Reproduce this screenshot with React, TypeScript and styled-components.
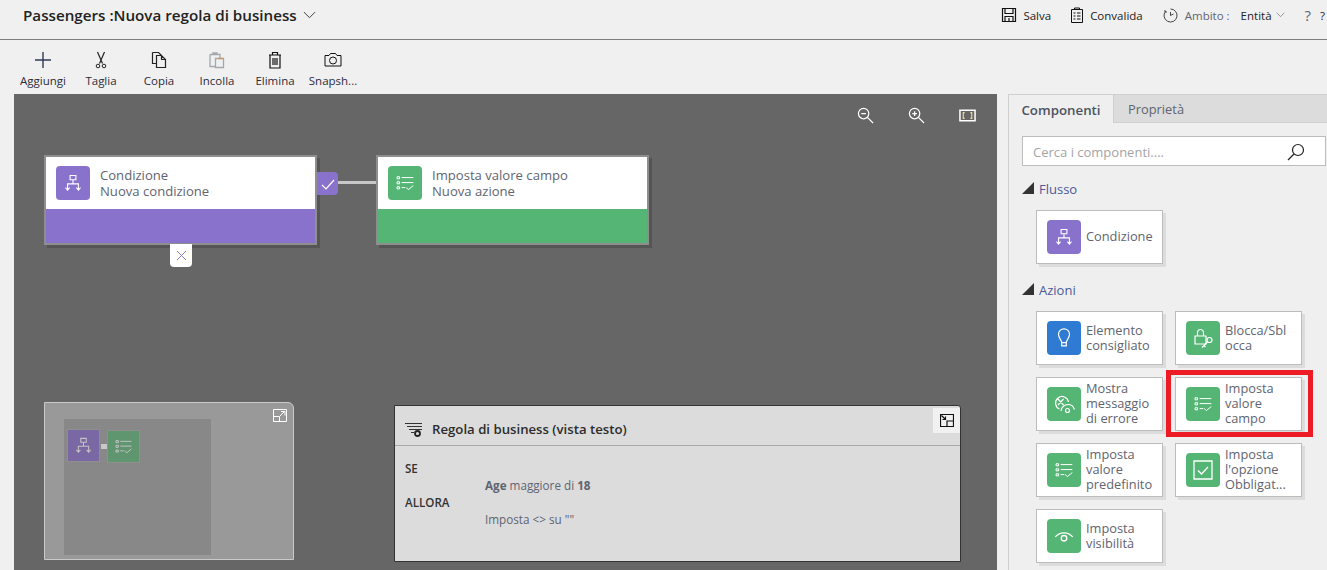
import React from 'react'
import styled, { createGlobalStyle } from 'styled-components'

const FONT = '"Open Sans", "Noto Sans", "Liberation Sans", sans-serif'
const PURPLE = '#8972cc'
const GREEN = '#54b574'
const BLUE = '#2f7bd3'
const TEXT = '#5f6470'
const DARK = '#222'

const GlobalStyle = createGlobalStyle`
  html, body {
    margin: 0;
    height: 100%;
    overflow: hidden;
    background: #f0f0f0;
    font-family: ${FONT};
  }
  * { box-sizing: border-box; }
`

const Page = styled.div`
  width: 1327px;
  height: 570px;
  display: flex;
  flex-direction: column;
  overflow: hidden;
`

const Header = styled.header`
  height: 40px;
  flex: none;
  display: flex;
  align-items: center;
  justify-content: space-between;
  padding: 0 2px 9px 23px;
  border-bottom: 1px solid #7c7c7c;
`

const Title = styled.div`
  display: flex;
  align-items: center;
  gap: 6px;
  font-size: 15.2px;
  font-weight: 600;
  color: ${DARK};
`

const Actions = styled.div`
  display: flex;
  align-items: center;
  font-size: 11.5px;
  color: ${DARK};
`

const Action = styled.div<{ $gap: number; $right: number }>`
  display: flex;
  align-items: center;
  gap: ${({ $gap }) => $gap}px;
  margin-right: ${({ $right }) => $right}px;
  white-space: nowrap;
`

const Muted = styled.span`
  color: ${TEXT};
`

const HelpMark = styled(Muted)`
  font-size: 15px;
`

const Toolbar = styled.div`
  height: 54px;
  flex: none;
  display: flex;
  padding-left: 14px;
`

const ToolButton = styled.button`
  width: 58px;
  border: 0;
  padding: 11px 0 0;
  background: none;
  display: flex;
  flex-direction: column;
  align-items: center;
  gap: 4px;
  font-family: ${FONT};
  font-size: 11.5px;
  line-height: 15px;
  color: #2c2c3c;
  white-space: nowrap;
`

const Main = styled.main`
  flex: 1;
  display: flex;
  min-height: 0;
  padding-left: 14px;
`

const Canvas = styled.section`
  position: relative;
  width: 983px;
  flex: none;
  background: #666;
  overflow: hidden;
`

const ZoomBar = styled.div`
  position: absolute;
  top: 13px;
  right: 21px;
  display: flex;
  align-items: center;
  gap: 34px;
  color: #fff;
`

const Node = styled.div<{ $x: number }>`
  position: absolute;
  left: ${({ $x }) => $x}px;
  top: 61px;
  width: 273px;
  height: 90px;
  display: flex;
  flex-direction: column;
  background: #fff;
  border: 2px solid #8e8e8e;
  box-shadow: 3px 3px 0 #555;
`

const NodeBody = styled.div`
  height: 52px;
  flex: none;
  display: flex;
  align-items: center;
  gap: 10px;
  padding: 0 0 1px 10px;
  font-size: 13.1px;
  line-height: 16px;
  color: ${TEXT};
`

const NodeFooter = styled.div<{ $color: string }>`
  flex: 1;
  background: ${({ $color }) => $color};
`

const IconTile = styled.div<{ $color: string }>`
  width: 34px;
  height: 34px;
  flex: none;
  display: flex;
  align-items: center;
  justify-content: center;
  border-radius: 4px;
  background: ${({ $color }) => $color};
  color: #fff;
`

const CheckTab = styled.div`
  position: absolute;
  left: 303px;
  top: 78px;
  width: 21px;
  height: 23px;
  display: flex;
  align-items: center;
  justify-content: center;
  border-radius: 0 4px 4px 0;
  background: ${PURPLE};
  color: #fff;
`

const Connector = styled.div`
  position: absolute;
  left: 324px;
  top: 87px;
  width: 39px;
  height: 3px;
  background: #c8c8c8;
`

const CloseTab = styled.div`
  position: absolute;
  left: 156px;
  top: 150px;
  width: 22px;
  height: 23px;
  display: flex;
  align-items: center;
  justify-content: center;
  border-radius: 0 0 4px 4px;
  background: #fff;
  color: #8a7ad0;
`

const MiniMap = styled.div`
  position: absolute;
  left: 30px;
  top: 308px;
  width: 250px;
  height: 158px;
  padding: 16px 0 0 19px;
  background: #999;
  border: 1px solid #c9c9c9;
  border-top-right-radius: 6px;
`

const MiniExpand = styled.div`
  position: absolute;
  top: 6px;
  right: 6px;
  color: #fff;
  line-height: 0;
`

const MiniPage = styled.div`
  width: 147px;
  height: 136px;
  padding: 10px 0 0 3px;
  display: flex;
  align-items: flex-start;
  background: #888;
`

const MiniTile = styled.div<{ $color: string; $down?: boolean }>`
  width: 33px;
  height: 33px;
  flex: none;
  margin-top: ${({ $down }) => ($down ? 1 : 0)}px;
  display: flex;
  align-items: center;
  justify-content: center;
  background: ${({ $color }) => $color};
  border: 1px solid #8f8f8f;
  color: #c4c4c4;
`

const MiniLink = styled.div`
  width: 8px;
  height: 5px;
  flex: none;
  margin: 15px -2px 0 1px;
  background: #c8c8c8;
`

const RulePanel = styled.div`
  position: absolute;
  left: 380px;
  top: 311px;
  width: 567px;
  height: 157px;
  background: #dcdcdc;
  border: 1px solid #333;
  border-top-right-radius: 3px;
`

const RuleHeader = styled.div`
  height: 40px;
  display: flex;
  align-items: center;
  gap: 9px;
  padding: 6px 0 0 10px;
  border-bottom: 1px solid #a8a8a8;
  font-size: 13.2px;
  font-weight: 600;
  color: #2c2c2c;
`

const RuleExpand = styled.div`
  position: absolute;
  top: 2px;
  right: 0;
  width: 27px;
  height: 25px;
  display: flex;
  align-items: center;
  justify-content: center;
  background: #f1f1f1;
  color: #111;
`

const RuleBody = styled.div`
  padding-top: 14px;
  font-size: 11.7px;
  line-height: 17px;
`

const RuleKeyword = styled.div`
  padding-left: 10px;
  font-weight: 600;
  font-size: 11.6px;
  color: #333;
`

const RuleLine = styled.div`
  padding-left: 90px;
  color: ${TEXT};

  b {
    font-weight: 700;
  }
`

const Side = styled.aside`
  flex: 1;
  margin-left: 11px;
  min-width: 0;
  background: #efefef;
  border-left: 1px solid #cfcfcf;
  border-top: 1px solid #cfcfcf;
`

const Tabs = styled.div`
  height: 28px;
  display: flex;
  background: #dcdcdc;
  border-bottom: 1px solid #cfcfcf;
`

const Tab = styled.div<{ $active?: boolean }>`
  height: ${({ $active }) => ($active ? 28 : 27)}px;
  display: flex;
  align-items: center;
  justify-content: center;
  padding-top: 1px;
  width: ${({ $active }) => ($active ? 105 : 84)}px;
  font-size: ${({ $active }) => ($active ? 13.3 : 12.9)}px;
  font-weight: ${({ $active }) => ($active ? 600 : 400)};
  color: ${({ $active }) => ($active ? '#4c5260' : TEXT)};
  background: ${({ $active }) => ($active ? '#efefef' : 'transparent')};
  border-right: ${({ $active }) => ($active ? '1px solid #cfcfcf' : '0')};
`

const SideBody = styled.div`
  padding: 13px 0 0 13px;
`

const Search = styled.div`
  width: 304px;
  height: 30px;
  display: flex;
  align-items: center;
  justify-content: space-between;
  padding: 1px 20px 0 10px;
  background: #fff;
  border: 1px solid #bdbdbd;
  font-size: 13px;
  color: #a4a4a4;
`

const GroupTitle = styled.div<{ $top: number }>`
  display: flex;
  align-items: center;
  gap: 5px;
  margin-top: ${({ $top }) => $top}px;
  height: 18px;
  font-size: 13px;
  color: #4a5a9a;
`

const Triangle = styled.span`
  width: 0;
  height: 0;
  margin-top: -3px;
  border-style: solid;
  border-width: 0 0 12px 12px;
  border-color: transparent transparent #333 transparent;
`

const CardGrid = styled.div`
  display: grid;
  grid-template-columns: repeat(2, 127px);
  grid-auto-rows: 54px;
  gap: 12px;
  margin: 12px 0 0 14px;
`

const Card = styled.div<{ $marked?: boolean }>`
  position: relative;
  display: flex;
  align-items: center;
  gap: 5px;
  padding-left: 10px;
  background: #fff;
  border: 1px solid #bcbcbc;
  box-shadow: 3px 3px 0 #dcdcdc;
  font-size: 12.8px;
  line-height: 15px;
  color: ${TEXT};

  ${({ $marked }) =>
    $marked &&
    `
    &::after {
      content: '';
      box-sizing: border-box;
      position: absolute;
      left: -10px;
      top: -8px;
      width: 147px;
      height: 67px;
      border: 5px solid #ed1c24;
    }
  `}
`

const CardLabel = styled.span`
  width: 74px;
  margin-bottom: 1px;
  overflow-wrap: anywhere;
`

type IconProps = { size?: number }

const Svg: React.FC<React.PropsWithChildren<{ size: number; box?: number }>> = ({ size, box = 24, children }) => (
  <svg
    width={size}
    height={size}
    viewBox={`0 0 ${box} ${box}`}
    fill="none"
    stroke="currentColor"
    strokeWidth={1}
    style={{ display: 'block', flex: 'none' }}
  >
    {children}
  </svg>
)

const FlowIcon: React.FC<IconProps> = ({ size = 20 }) => (
  <Svg size={size}>
    <path d="M8.500 3h7v5h-7zM12 8v5M5.500 20v-7h13v7M3 17.500l2.500 3 2.500-3M16 17.500l2.500 3 2.500-3" strokeWidth={1.3} />
  </Svg>
)

const FieldIcon: React.FC<IconProps> = ({ size = 20 }) => (
  <Svg size={size}>
    <path d="M2.500 4.500h3v2.500h-3zM2.500 10.500h3v2.500h-3zM2.500 16.500h3v2.500h-3zM8 5.500h14M8 11.500h14M8 17.500h4M13 17l3 3 6-5" strokeWidth={1.2} />
  </Svg>
)

const BulbIcon: React.FC<IconProps> = ({ size = 22 }) => (
  <Svg size={size}>
    <path d="M9.500 17c0-3-3.500-4.500-3.500-9a6 6 0 0 1 12 0c0 4.500-3.500 6-3.500 9zM9.500 17v3.500h5V17" strokeWidth={1.3} />
  </Svg>
)

const LockIcon: React.FC<IconProps> = ({ size = 24 }) => (
  <Svg size={size}>
    <path d="M4 10h11v8H4zM6.500 10V6.500a3 3 0 0 1 6 0V10" strokeWidth={1.2} />
    <circle cx="18.500" cy="14" r="2.500" strokeWidth={1.2} />
    <path d="M16.800 15.800L11 21.500M13 19.500l1.500 1.500" strokeWidth={1.2} />
  </Svg>
)

const ErrorIcon: React.FC<IconProps> = ({ size = 24 }) => (
  <Svg size={size}>
    <path d="M7.500 17a6.500 6.500 0 1 1 9-7M6 7l5.500 6M11.500 7L6 13M9 19c0-4 4-6.500 7-6.500s5.500 2 6.500 5" strokeWidth={1.2} />
    <circle cx="15.500" cy="18.500" r="2" strokeWidth={1.2} />
  </Svg>
)

const CheckboxIcon: React.FC<IconProps> = ({ size = 24 }) => (
  <Svg size={size}>
    <path d="M3 3h18v18H3zM7 12.500l3.500 3.500 6.500-7" strokeWidth={1.3} />
  </Svg>
)

const EyeIcon: React.FC<IconProps> = ({ size = 22 }) => (
  <Svg size={size}>
    <path d="M2.500 13c5-6 14-6 19 0" strokeWidth={1.3} />
    <circle cx="12" cy="14.500" r="3" strokeWidth={1.5} />
  </Svg>
)

const Chevron: React.FC<{ size: number; color: string }> = ({ size, color }) => (
  <svg width={size} height={size * 0.6} viewBox="0 0 14 8" fill="none" stroke={color} strokeWidth={1} style={{ display: 'block' }}>
    <path d="M1 1l6 6 6-6" />
  </svg>
)

const SaveIcon = () => (
  <Svg size={16} box={16}>
    <path d="M1.500 1.500h13v13h-13zM4 1.500v5h8v-5M4 14.500v-5h8v5M8 11v3.500" stroke="#111" strokeWidth={1.2} />
  </Svg>
)

const ValidateIcon = () => (
  <Svg size={16} box={16}>
    <path d="M2.500 2.500h11v13h-11zM5.500 2.500V1h5v1.500M4.500 6h2M8 6h3.500M4.500 9h2M8 9h3.500M4.500 12h2M8 12h3.500" stroke="#111" />
  </Svg>
)

const ScopeIcon = () => (
  <Svg size={15} box={15}>
    <path d="M7.500 1a6.500 6.500 0 1 1-5 2.400M7.500 7.500V4M7.500 7.500l3-1.500M2 2v2h2" stroke="#444" />
  </Svg>
)

const ToolIcons: Record<string, React.ReactNode> = {
  plus: (
    <Svg size={18} box={18}>
      <path d="M9 1v16M1 9h16" stroke="#2f3a55" strokeWidth={1.4} />
    </Svg>
  ),
  cut: (
    <Svg size={18} box={18}>
      <path d="M5.500 1l5 11.500M12.500 1l-5 11.500" stroke="#222" strokeWidth={1.2} />
      <circle cx="6" cy="15" r="1.800" stroke="#222" />
      <circle cx="12" cy="15" r="1.800" stroke="#222" />
    </Svg>
  ),
  copy: (
    <Svg size={18} box={18}>
      <path d="M2.500 1.500h6l3 3M2.500 1.500v11H6M6.500 4.500h5l4 4v8h-9zM11.500 4.500v4h4" stroke="#222" strokeWidth={1.2} />
    </Svg>
  ),
  paste: (
    <Svg size={18} box={18}>
      <path d="M2 3.500h10v4M2 3.500v12h5M5 3.500V2h4v1.500M7.500 7.500h8v9h-8z" stroke="#a3a8ae" strokeWidth={1.3} />
      <path d="M10 7.500h5" stroke="#c89868" strokeWidth={1.3} />
    </Svg>
  ),
  trash: (
    <Svg size={18} box={18}>
      <path d="M3 4h12M6.500 4V1.500h5V4M4 4v13h10V4M7 7v7M9 7v7M11 7v7" stroke="#111" strokeWidth={1.2} />
    </Svg>
  ),
  camera: (
    <Svg size={18} box={18}>
      <path d="M1 4.500h4L6.500 2.500h5L13 4.500h4V15H1z" stroke="#111" />
      <circle cx="9" cy="9.500" r="3.500" stroke="#111" />
    </Svg>
  ),
}

const TOOLS = [
  { icon: 'plus', label: 'Aggiungi' },
  { icon: 'cut', label: 'Taglia' },
  { icon: 'copy', label: 'Copia' },
  { icon: 'paste', label: 'Incolla' },
  { icon: 'trash', label: 'Elimina' },
  { icon: 'camera', label: 'Snapsh...' },
]

const ACTIONS = [
  { color: BLUE, icon: <BulbIcon />, label: 'Elemento consigliato' },
  { color: GREEN, icon: <LockIcon />, label: 'Blocca/Sbl occa' },
  { color: GREEN, icon: <ErrorIcon />, label: 'Mostra messaggio di errore' },
  { color: GREEN, icon: <FieldIcon />, label: 'Imposta valore campo', marked: true },
  { color: GREEN, icon: <FieldIcon />, label: 'Imposta valore predefinito' },
  { color: GREEN, icon: <CheckboxIcon />, label: "Imposta l'opzione Obbligat..." },
  { color: GREEN, icon: <EyeIcon />, label: 'Imposta visibilità' },
]

const App: React.FC = () => (
  <Page>
    <GlobalStyle />
    <Header>
      <Title>
        Passengers :Nuova regola di business
        <Chevron size={13} color="#333" />
      </Title>
      <Actions>
        <Action $gap={6} $right={18}>
          <SaveIcon />
          Salva
        </Action>
        <Action $gap={5} $right={20}>
          <ValidateIcon />
          Convalida
        </Action>
        <Action $gap={7} $right={11}>
          <ScopeIcon />
          <Muted>Ambito :</Muted>
        </Action>
        <Action $gap={4} $right={20}>
          Entità
          <Chevron size={9} color="#666" />
        </Action>
        <Action $gap={9} $right={0}>
          <HelpMark>?</HelpMark>
          <span>?</span>
        </Action>
      </Actions>
    </Header>

    <Toolbar>
      {TOOLS.map(({ icon, label }) => (
        <ToolButton key={label}>
          {ToolIcons[icon]}
          {label}
        </ToolButton>
      ))}
    </Toolbar>

    <Main>
      <Canvas>
        <ZoomBar>
          <Svg size={17} box={18}>
            <circle cx="7" cy="7" r="5.500" strokeWidth={1.3} />
            <path d="M4.500 7h5M11 11l6 6" strokeWidth={1.3} />
          </Svg>
          <Svg size={17} box={18}>
            <circle cx="7" cy="7" r="5.500" strokeWidth={1.3} />
            <path d="M4.500 7h5M7 4.500v5M11 11l6 6" strokeWidth={1.3} />
          </Svg>
          <Svg size={17} box={18}>
            <path d="M1 3.500h16v11H1z" strokeWidth={1.6} />
            <path d="M6 6H4.500v6H6M12 6h1.500v6H12" stroke="#f0d9a8" strokeWidth={1.2} />
          </Svg>
        </ZoomBar>

        <Node $x={30}>
          <NodeBody>
            <IconTile $color={PURPLE}>
              <FlowIcon />
            </IconTile>
            <div>
              Condizione
              <br />
              Nuova condizione
            </div>
          </NodeBody>
          <NodeFooter $color={PURPLE} />
        </Node>
        <CheckTab>
          <Svg size={14} box={14}>
            <path d="M1 8l4 4 8-9" strokeWidth={1.2} />
          </Svg>
        </CheckTab>
        <Connector />
        <CloseTab>
          <Svg size={11} box={11}>
            <path d="M1 1l9 9M10 1l-9 9" />
          </Svg>
        </CloseTab>
        <Node $x={362}>
          <NodeBody>
            <IconTile $color={GREEN}>
              <FieldIcon />
            </IconTile>
            <div>
              Imposta valore campo
              <br />
              Nuova azione
            </div>
          </NodeBody>
          <NodeFooter $color={GREEN} />
        </Node>

        <MiniMap>
          <MiniExpand>
            <Svg size={14} box={14}>
              <path d="M.5.500h13v12H.5zM.5 7.500h6v5M7 7l5-5M8 2.500h4v4" />
            </Svg>
          </MiniExpand>
          <MiniPage>
            <MiniTile $color="#7a68a4">
              <FlowIcon size={19} />
            </MiniTile>
            <MiniLink />
            <MiniTile $color="#5f9670" $down>
              <FieldIcon size={19} />
            </MiniTile>
          </MiniPage>
        </MiniMap>

        <RulePanel>
          <RuleExpand>
            <Svg size={14} box={14}>
              <path d="M.5.500h13v12H.5zM7 13V7h6.500M1.500 1.500l4 4M5.500 2.500v3h-3" strokeWidth={1.2} />
            </Svg>
          </RuleExpand>
          <RuleHeader>
            <Svg size={18} box={18}>
              <path d="M0 3.500h17M2 6.500h15M4 9.500h13M6 12.500h3" stroke="#333" />
              <circle cx="12.500" cy="13.500" r="2.500" stroke="#222" strokeWidth={1.8} />
            </Svg>
            Regola di business (vista testo)
          </RuleHeader>
          <RuleBody>
            <RuleKeyword>SE</RuleKeyword>
            <RuleLine>
              <b>Age</b> maggiore di <b>18</b>
            </RuleLine>
            <RuleKeyword>ALLORA</RuleKeyword>
            <RuleLine>Imposta {'<>'} su ""</RuleLine>
          </RuleBody>
        </RulePanel>
      </Canvas>

      <Side>
        <Tabs>
          <Tab $active>Componenti</Tab>
          <Tab>Proprietà</Tab>
        </Tabs>
        <SideBody>
          <Search>
            Cerca i componenti....
            <svg width="18" height="18" viewBox="0 0 18 18" fill="none" stroke="#222" strokeWidth={1.2}>
              <circle cx="11" cy="7" r="5.500" />
              <path d="M7 11l-6 6" />
            </svg>
          </Search>
          <GroupTitle $top={14}>
            <Triangle />
            Flusso
          </GroupTitle>
          <CardGrid>
            <Card>
              <IconTile $color={PURPLE}>
                <FlowIcon />
              </IconTile>
              <CardLabel>Condizione</CardLabel>
            </Card>
          </CardGrid>
          <GroupTitle $top={17}>
            <Triangle />
            Azioni
          </GroupTitle>
          <CardGrid>
            {ACTIONS.map(({ color, icon, label, marked }) => (
              <Card key={label} $marked={marked}>
                <IconTile $color={color}>{icon}</IconTile>
                <CardLabel>{label}</CardLabel>
              </Card>
            ))}
          </CardGrid>
        </SideBody>
      </Side>
    </Main>
  </Page>
)

export default App
